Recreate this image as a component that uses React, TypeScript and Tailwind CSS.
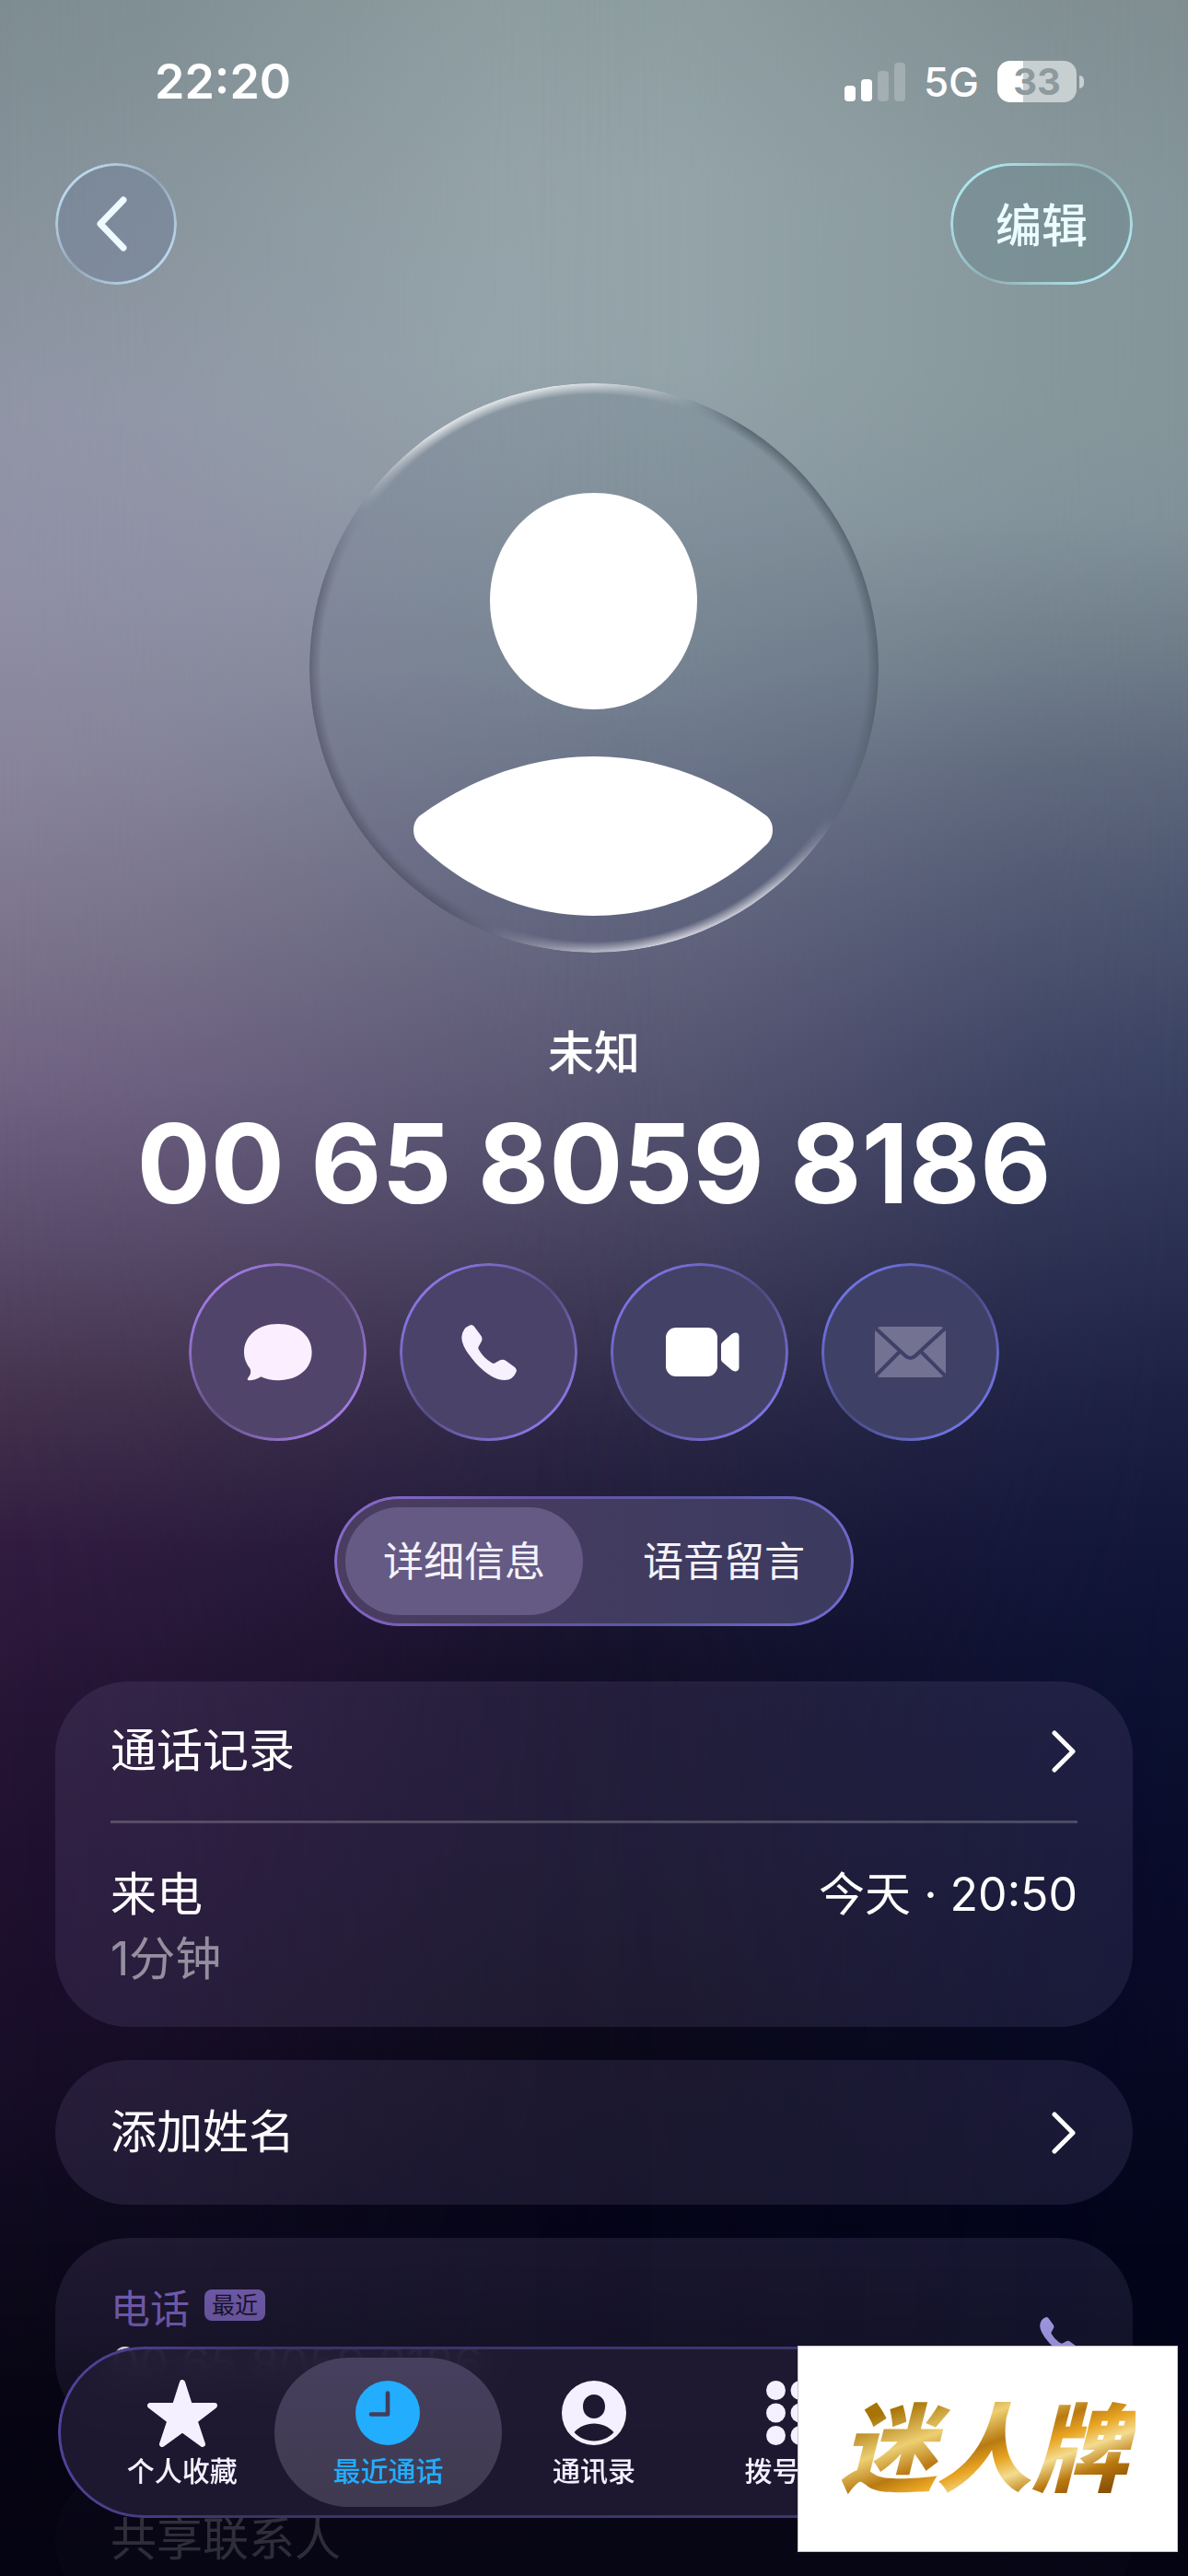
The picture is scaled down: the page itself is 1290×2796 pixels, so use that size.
import type { ReactNode } from "react";
import { clsx } from "clsx";

const FONT =
  "font-[Inter,'Noto_Sans_CJK_SC','Liberation_Sans',sans-serif]";

/** Borde fino de cristal: brilla arriba-izquierda y abajo-derecha. */
function GlassRing({ className }: { className: string }) {
  return (
    <span
      aria-hidden="true"
      className={clsx(
        "pointer-events-none absolute inset-0 rounded-[inherit] p-[3px] [mask:linear-gradient(#000_0_0)_content-box_exclude,linear-gradient(#000_0_0)]",
        className,
      )}
    />
  );
}

/** Tres columnas de color que se funden entre sí de lado a lado. */
function Backdrop() {
  return (
    <div aria-hidden="true" className="absolute inset-0">
      <div className="absolute inset-0 bg-[linear-gradient(to_bottom,#90a0a3_0%,#97a6ab_7%,#96a6ac_14%,#909fa6_19%,#808d99_26%,#6d738a_32%,#605f7a_39%,#524f6c_45%,#3d3855_51%,#2a2543_56%,#1c1835_61%,#120e26_66%,#100d24_72%,#0b0919_79%,#060518_86%,#04040f_100%)]" />
      <div className="absolute inset-0 bg-[linear-gradient(to_bottom,#7d8c91_0%,#86929a_8%,#9095a6_16%,#9090a6_22%,#88849a_30%,#7a728b_37%,#706383_42%,#5b4c6c_48%,#45334f_54%,#311c40_60%,#271536_66%,#201030_72%,#190e2a_79%,#0f0a1e_86%,#04030e_100%)] [mask-image:linear-gradient(to_right,#000,#000000d6_13%,#00000080_27%,#00000029_41%,transparent_55%)]" />
      <div className="absolute inset-0 bg-[linear-gradient(to_bottom,#7f8d91_0%,#84959a_8%,#849599_16%,#81919a_20%,#6f7d89_25%,#5c667b_30%,#4c556f_35%,#3b4363_41%,#2b3152_48%,#1d2244_54%,#12173a_60%,#0c1131_66%,#090c2b_72%,#070925_79%,#03051c_87%,#020316_100%)] [mask-image:linear-gradient(to_left,#000,#000000d6_13%,#00000080_27%,#00000029_41%,transparent_55%)]" />
    </div>
  );
}

function StatusBar() {
  return (
    <div className="flex h-[177px] items-center justify-between pr-[113px] pl-[168px] text-white">
      <time className="text-[52px] leading-none font-semibold">22:20</time>
      <div className="flex items-center gap-5">
        <svg width="66" height="42" viewBox="0 0 66 42" fill="#fff" aria-label="信号">
          <rect x="0" y="25" width="12" height="17" rx="4" />
          <rect x="18" y="18" width="12" height="24" rx="4" />
          <rect x="36" y="9" width="12" height="33" rx="4" opacity=".22" />
          <rect x="54" y="0" width="12" height="42" rx="4" opacity=".22" />
        </svg>
        <span className="text-[44px] leading-none font-medium">5G</span>
        <div className="flex items-center gap-[3px]">
          <div className="flex h-[45px] w-[86px] items-center justify-center rounded-[14px] bg-[linear-gradient(to_right,#fff_33%,#c8cfd1_33%)]">
            <span className="text-[40px] leading-none font-bold text-[#8d9a9e]">33</span>
          </div>
          <span className="h-[14px] w-[5px] rounded-r-full bg-[#c8cfd1]" />
        </div>
      </div>
    </div>
  );
}

function Avatar() {
  return (
    <div className="relative mx-auto mt-[107px] size-[618px] rounded-full bg-[#4a5a70]/15">
      <span
        aria-hidden="true"
        className="absolute inset-0 rounded-full bg-[conic-gradient(from_0deg,#d8dee2,#ccd2d699_12deg,transparent_21deg,#5b6873_32deg,#56636f_100deg,transparent_122deg,#c9cad4_142deg,#d8d8e0_165deg,#b5b5c4_182deg,transparent_202deg,#55556b_212deg,#636879_285deg,transparent_304deg,#e4e8ea_326deg,#e4e8ea_348deg,#d8dee2)] [mask-image:radial-gradient(closest-side,transparent_96%,#000_100%)]"
      />
      <svg className="absolute inset-0 size-full" viewBox="0 0 618 618" fill="#fff" aria-hidden="true">
        <path d="M309 119C374 119 421 170 421 236C421 303 372 354 309 354C246 354 196 303 196 236C196 170 244 119 309 119Z" />
        <path d="M309 405C380 405 444 431 497 470Q503 476 503 485Q503 494 497 500C449 548 384 578 309 578C234 578 168 548 119 500Q113 494 113 485Q113 476 119 470C172 431 238 405 309 405Z" />
      </svg>
    </div>
  );
}

const PHONE_PATH =
  "M10.5 0Q12.5 0 13.7 1.6L21.5 12Q23.4 15 21.8 18L18.8 23.5Q17.8 25.3 19 27Q24 36 33 41.2Q35 42.2 36.8 41.2L41.5 38.6Q45 36.8 48 38.8L58 46Q60.6 48.2 59.6 51Q56 60 47 60Q33 60 16 42Q0 24 .3 13.5Q1 3 10.5 0Z";

function PhoneGlyph({ size }: { size: number }) {
  return (
    <svg width={size} height={size} viewBox="0 0 60 60" fill="currentColor" aria-hidden="true">
      <path d={PHONE_PATH} />
    </svg>
  );
}

function MessageGlyph() {
  return (
    <svg width="74" height="62" viewBox="0 0 74 62" fill="currentColor" aria-hidden="true">
      <path d="M37 0C59 0 73.6 13 73.6 30.8C73.6 48.5 59 61.2 37 61.2C30 61.2 24 60 18.3 57.2C14 60 9 61.4 5.5 61.2C3.5 61 3.2 59.5 4.5 58.2C7 55.5 8 52 6.5 48.5C2.5 43 0 38 0 30.8C0 13 15 0 37 0Z" />
    </svg>
  );
}

function VideoGlyph() {
  return (
    <svg width="86" height="53" viewBox="-6 0 86 53" fill="currentColor" aria-hidden="true">
      <rect width="56" height="53" rx="11" />
      <path d="M60 19Q60 17 61.5 15.7L71.5 7Q74 5 76.5 5.6Q79.5 6.5 79.5 10V43Q79.5 46.5 76.5 47.3Q74 48 71.5 46L61.5 37.5Q60 36.2 60 34.5Z" />
    </svg>
  );
}

function MailGlyph() {
  return (
    <svg width="77" height="55" viewBox="0 0 77 55" aria-hidden="true">
      <rect width="77" height="55" rx="6" fill="#737292" />
      <path d="M0 1L33 31.5Q38.5 36.5 44 31.5L77 1M27 27L0 54M50 27L77 54" fill="none" stroke="#403f68" strokeWidth="4" />
    </svg>
  );
}

interface Action {
  label: string;
  icon: ReactNode;
  tone: string;
  ring: string;
  disabled?: boolean;
}

const ACTIONS: Action[] = [
  {
    label: "信息",
    icon: <MessageGlyph />,
    tone: "bg-[#51446a] text-[#fbefff]",
    ring: "bg-[linear-gradient(135deg,#a07ae4_15%,#62507f_50%,#a07ae4_85%)]",
  },
  {
    label: "呼叫",
    icon: <PhoneGlyph size={60} />,
    tone: "bg-[#4a4269] text-[#f6f0ff]",
    ring: "bg-[linear-gradient(135deg,#8976e4_15%,#544d80_50%,#8976e4_85%)]",
  },
  {
    label: "视频",
    icon: <VideoGlyph />,
    tone: "bg-[#444167] text-white",
    ring: "bg-[linear-gradient(135deg,#7d73e4_15%,#4d4a7e_50%,#7d73e4_85%)]",
  },
  {
    label: "邮件",
    icon: <MailGlyph />,
    tone: "bg-[#3f4066] text-white",
    ring: "bg-[linear-gradient(135deg,#7073e4_15%,#47497e_50%,#7073e4_85%)]",
    disabled: true,
  },
];

function Card({ className, children }: { className?: string; children: ReactNode }) {
  return (
    <section className={clsx("rounded-[80px] bg-[#8a80b4]/15 px-[60px]", className)}>
      {children}
    </section>
  );
}

function Chevron() {
  return (
    <svg width="28" height="46" viewBox="0 0 28 46" fill="none" aria-hidden="true">
      <path d="M3 3L23 23L3 43" stroke="#fff" strokeWidth="5" strokeLinecap="round" strokeLinejoin="round" />
    </svg>
  );
}

function StarGlyph() {
  return (
    <svg width="76" height="73" viewBox="0 0 76 73" fill="currentColor" stroke="currentColor" strokeWidth="6" strokeLinejoin="round" aria-hidden="true">
      <path d="M38 3L46 28H73L51.5 44.5L60 70L38 54L16 70L24.5 44.5L3 28H30Z" />
    </svg>
  );
}

function ClockGlyph() {
  return (
    <svg width="70" height="70" viewBox="0 0 70 70" aria-hidden="true">
      <circle cx="35" cy="35" r="35" fill="currentColor" />
      <path d="M35 13.5V36.5H17" fill="none" stroke="#433d59" strokeWidth="4.6" strokeLinecap="round" strokeLinejoin="round" />
    </svg>
  );
}

function ContactGlyph() {
  return (
    <svg width="70" height="70" viewBox="0 0 70 70" fill="currentColor" fillRule="evenodd" aria-hidden="true">
      <path d="M35 0A35 35 0 1 1 35 70A35 35 0 1 1 35 0ZM35 15C28 15 23 20.5 23 28C23 35.5 28 41 35 41C42 41 47 35.5 47 28C47 20.5 42 15 35 15ZM13.5 56C19 62 26.5 65.5 35 65.5C43.5 65.5 51 62 56.5 56C51 50 43.5 46.5 35 46.5C26.5 46.5 19 50 13.5 56Z" />
    </svg>
  );
}

function KeypadGlyph() {
  return (
    <svg width="74" height="70" viewBox="0 0 74 70" fill="currentColor" aria-hidden="true">
      {[10.5, 37, 63.5].map((x) =>
        [10.5, 35, 59.5].map((y) => <circle key={`${x}-${y}`} cx={x} cy={y} r="10.5" />),
      )}
    </svg>
  );
}

const TABS = [
  { label: "个人收藏", icon: <StarGlyph /> },
  { label: "最近通话", icon: <ClockGlyph />, active: true },
  { label: "通讯录", icon: <ContactGlyph /> },
  { label: "拨号键盘", icon: <KeypadGlyph /> },
];

function TabBar() {
  return (
    <nav className="fixed inset-x-[63px] bottom-[63px] grid h-[186px] grid-cols-5 rounded-full bg-[#201b33]/90 px-[23px] py-3 backdrop-blur-lg">
      <GlassRing className="bg-[linear-gradient(100deg,#5244a0,#3b3366_20%,#3b3870_70%,#5a55b8)]" />
      {TABS.map((tab) => (
        <button
          key={tab.label}
          type="button"
          aria-current={tab.active ? "page" : undefined}
          className={clsx(
            "-mx-3 flex flex-col items-center rounded-full pt-6",
            tab.active
              ? "bg-linear-to-b from-[#463f5e] to-[#3f3a50] text-[#22adff]"
              : "text-[#f5f0ff]",
          )}
        >
          <span className="flex h-[72px] items-center">{tab.icon}</span>
          <span className="mt-2 text-[30px] leading-[38px] font-medium">{tab.label}</span>
        </button>
      ))}
    </nav>
  );
}

export default function App() {
  return (
    <div className={clsx("relative h-screen overflow-hidden bg-[#04040f] text-white", FONT)}>
      <Backdrop />

      <div className="relative">
        <StatusBar />

        <header className="flex items-center justify-between px-[60px]">
          <button
            type="button"
            aria-label="返回"
            className="relative flex size-[132px] items-center justify-center rounded-full bg-[#6b7a99]/40"
          >
            <GlassRing className="bg-[linear-gradient(135deg,#bcd8ee_15%,#93a5b5_50%,#bcd8ee_85%)]" />
            <svg width="36" height="60" viewBox="0 0 36 60" fill="none" className="mr-2" aria-hidden="true">
              <path d="M30 4L5 30L30 56" stroke="#eefaff" strokeWidth="7" strokeLinecap="round" strokeLinejoin="round" />
            </svg>
          </button>
          <button
            type="button"
            className="relative flex h-[132px] w-[198px] items-center justify-center rounded-full bg-[#6a878d]/45 pt-1 text-[50px] font-medium text-[#ecfcff]"
          >
            <GlassRing className="bg-[linear-gradient(135deg,#aee4ec_15%,#90acb1_50%,#aee4ec_85%)]" />
            编辑
          </button>
        </header>

        <Avatar />

        <p className="mt-[73px] text-center text-[50px] leading-[72px] font-medium">未知</p>
        <h1 className="mt-3 text-center text-[119px] leading-[144px] font-bold whitespace-nowrap">
          00 65 8059 8186
        </h1>

        <div className="mt-9 flex justify-center gap-9">
          {ACTIONS.map((action) => (
            <button
              key={action.label}
              type="button"
              aria-label={action.label}
              disabled={action.disabled}
              className={clsx(
                "relative flex size-[193px] items-center justify-center rounded-full",
                action.tone,
              )}
            >
              <GlassRing className={action.ring} />
              {action.icon}
            </button>
          ))}
        </div>

        <div
          role="tablist"
          className="relative mx-auto mt-[60px] flex h-[141px] w-fit gap-6 rounded-full bg-linear-to-r from-[#493d60] to-[#3c3a60] p-3 text-[44px] text-[#f4f2f8]"
        >
          <GlassRing className="bg-[linear-gradient(110deg,#8a6cd0,#6a55a5_35%,#5a58a0_65%,#746cd8)]" />
          <button type="button" role="tab" aria-selected="true" className="w-[258px] rounded-full bg-[#655a84]">
            详细信息
          </button>
          <button type="button" role="tab" aria-selected="false" className="w-[258px] rounded-full">
            语音留言
          </button>
        </div>

        <main className="mt-[60px] flex flex-col gap-9 px-[60px] text-[50px]">
          <Card>
            <button type="button" className="flex h-[151px] w-full items-center justify-between">
              通话记录
              <Chevron />
            </button>
            <div className="h-[3px] bg-white/20" />
            <div className="flex justify-between pt-[42px] pb-[39px] leading-[70px]">
              <div>
                <p>来电</p>
                <p className="text-white/50">1分钟</p>
              </div>
              <p>今天 · 20:50</p>
            </div>
          </Card>

          <Card>
            <button type="button" className="flex h-[157px] w-full items-center justify-between">
              添加姓名
              <Chevron />
            </button>
          </Card>

          <Card className="flex h-[213px] items-center justify-between">
            <div className="leading-[60px]">
              <p className="flex items-center gap-4 text-[43px] text-[#7a62b8]">
                电话
                <span className="mb-2 rounded-lg bg-[#755fb0] px-2 text-[25px] leading-[34px] text-[#1b142c]">
                  最近
                </span>
              </p>
              <p>00 65 8059 8186</p>
            </div>
            <button type="button" aria-label="呼叫号码" className="text-[#b4acff]">
              <PhoneGlyph size={41} />
            </button>
          </Card>

          <Card>
            <button type="button" className="flex h-[157px] w-full items-center">
              共享联系人
            </button>
          </Card>
        </main>
      </div>

      {/* Los contenidos se apagan al pasar por debajo de la barra */}
      <div className="pointer-events-none fixed inset-x-0 bottom-0 h-[400px] bg-[linear-gradient(to_bottom,transparent,#05041200_10%,#05041230_38%,#050412d0_75%,#050412d8)]" />

      <TabBar />

      <aside className="fixed right-[11px] bottom-[26px] flex h-[224px] w-[413px] items-center justify-center border border-[#c8c8cc] bg-white">
        <span className="bg-[linear-gradient(160deg,#a87408_20%,#edcf72_36%,#b87a12_48%,#e9a422_56%,#f3dc90_64%,#b9780f_74%,#8a5206_84%)] bg-clip-text pr-2 text-[104px] leading-[150px] font-black text-transparent italic">
          迷人牌
        </span>
      </aside>
    </div>
  );
}
